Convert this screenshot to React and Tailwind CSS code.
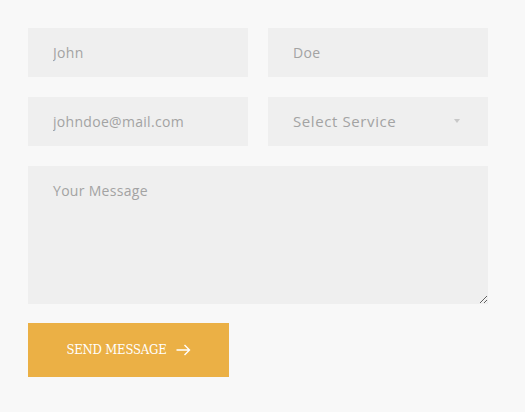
import React from 'react';

const field =
  'h-[49px] w-full bg-[#efefef] px-[25px] text-[14px] tracking-[0.3px] text-[#555] placeholder:text-[#a3a3a3] outline-none';

const App = () => {
  return (
    <div className="min-h-screen bg-[#f8f8f8] px-[28px] pt-[28px] font-['Open_Sans',sans-serif]">
      <form className="w-[460px]" onSubmit={(e) => e.preventDefault()}>
        <div className="grid grid-cols-2 gap-x-[20px] gap-y-[20px]">
          <input type="text" placeholder="John" className={field} />
          <input type="text" placeholder="Doe" className={field} />
          <input type="email" placeholder="johndoe@mail.com" className={field} />
          <div className="relative">
            <select
              defaultValue=""
              className="h-[49px] w-full appearance-none bg-[#efefef] px-[25px] text-[15px] tracking-[0.6px] text-[#a3a3a3] outline-none"
            >
              <option value="" disabled>Select Service</option>
              <option>Consulting</option>
              <option>Design</option>
            </select>
            <span className="pointer-events-none absolute right-[28px] top-[22px] h-0 w-0 border-x-[3px] border-t-[4px] border-x-transparent border-t-[#c8c8c8]" />
          </div>
        </div>
        <textarea
          placeholder="Your Message"
          className="mt-[20px] block h-[138px] w-full bg-[#efefef] px-[25px] pt-[14px] text-[14px] tracking-[0.3px] text-[#555] placeholder:text-[#a3a3a3] outline-none"
        />
        <button
          type="submit"
          className="mt-[19px] flex h-[54px] w-[201px] items-center justify-center gap-[9px] bg-[#ebb045] text-white"
        >
          <span className="font-['DejaVu_Serif_Condensed','Liberation_Serif',serif] text-[13px] tracking-[-0.2px]">SEND MESSAGE</span>
          <svg width="15" height="12" viewBox="0 0 15 12" fill="none" stroke="white" strokeWidth="1.4">
            <path d="M0.5 6H13.5M8.5 1L13.5 6L8.5 11" />
          </svg>
        </button>
      </form>
    </div>
  );
};

export default App;
